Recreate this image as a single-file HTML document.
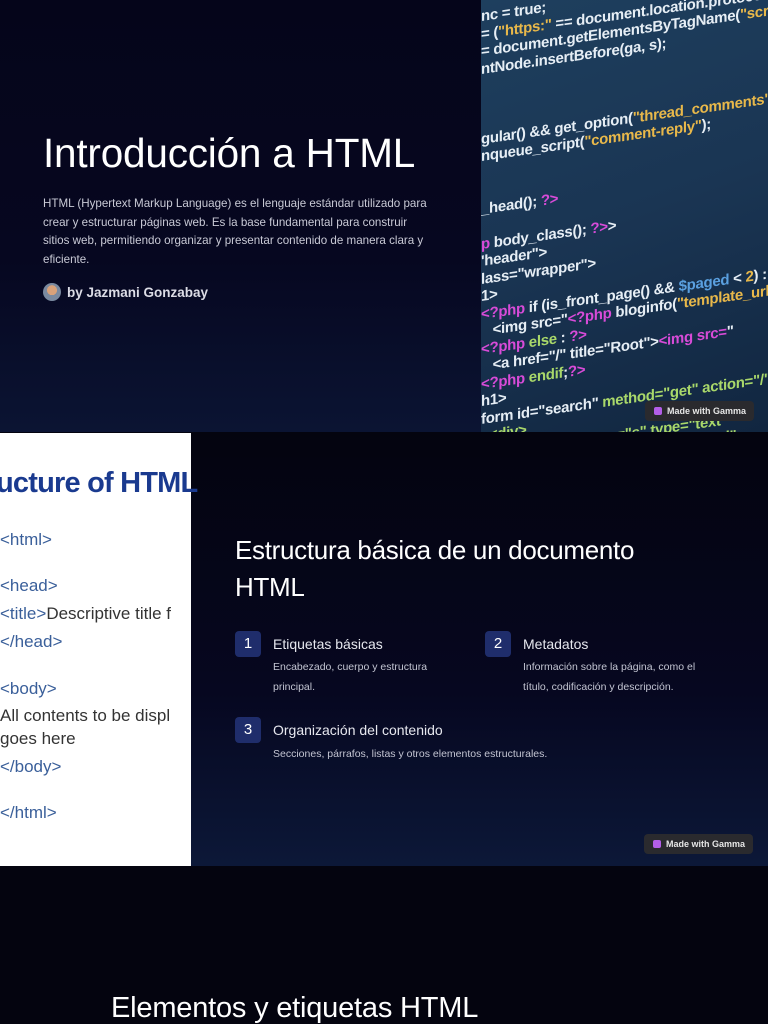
<!DOCTYPE html>
<html><head><meta charset="utf-8"><style>
*{margin:0;padding:0;box-sizing:border-box}
body{width:768px;height:1024px;overflow:hidden;background:#04040f;font-family:"Liberation Sans",sans-serif;color:#fff}
.slide{position:absolute;left:0;width:768px;overflow:hidden}
#s1{top:0;height:432px;background:linear-gradient(180deg,#05051a 0%,#060720 60%,#0b1433 100%)}
#s2{top:433px;height:433px;background:linear-gradient(180deg,#04040f 0%,#060720 60%,#0c1838 100%)}
#s3{top:867px;height:157px;background:#04040f}
h1{position:absolute;left:43px;top:130px;font-size:40.5px;font-weight:400;letter-spacing:-0.2px}
.p1{position:absolute;left:43px;top:195px;width:393px;font-size:11.6px;line-height:18.7px;color:#c9cad6;letter-spacing:0}
.by{position:absolute;left:43px;top:283px;font-size:13.5px;font-weight:bold;color:#dcdde6;display:flex;align-items:center}
.av{width:18px;height:18px;border-radius:50%;background:radial-gradient(circle at 50% 40%,#d9a27a 0 35%,#7a8aa0 36%);margin-right:6px}
.code{position:absolute;left:481px;top:0;width:287px;height:432px;overflow:hidden;background:linear-gradient(160deg,#1e3f5e 0%,#1a3553 50%,#112640 100%)}
.code pre{position:absolute;left:0;top:8px;transform:skewY(-8deg);transform-origin:0 0;font-family:"Liberation Sans",sans-serif;font-size:15px;line-height:17.5px;color:#e6eef5;white-space:pre;letter-spacing:-0.3px;font-weight:bold}
.y{color:#e8b84a}.m{color:#d84bd8}.g{color:#a9d86a}.b{color:#5aa0e0}
.badge{position:absolute;background:#2a2a2e;border-radius:4px;font-size:9px;color:#e6e6e6;padding:5px 8px 5px 22px;font-weight:bold}
.badge:before{content:"";position:absolute;left:9px;top:6px;width:8px;height:8px;border-radius:2px;background:#b35ee8}
.img2{position:absolute;left:0;top:0;width:191px;height:433px;background:#fff;color:#3a5f9a;font-size:17px}
.img2 div{position:absolute;left:0;white-space:nowrap}
.dk{color:#333}
h2{position:absolute;left:235px;top:99px;font-size:26px;font-weight:400;line-height:37px;width:470px;letter-spacing:-0.3px}
.n{position:absolute;width:26px;height:26px;background:#1f2d6b;border-radius:4px;font-size:15px;text-align:center;line-height:26px}
.t{position:absolute;font-size:14px;color:#e6e7ee}
.d{position:absolute;font-size:10.5px;line-height:19.5px;color:#c3c5d2}
h3{position:absolute;left:111px;top:125px;font-size:29px;font-weight:400;letter-spacing:-0.2px}
</style></head><body>
<div class="slide" id="s1">
<h1>Introducción a HTML</h1>
<div class="p1">HTML (Hypertext Markup Language) es el lenguaje estándar utilizado para crear y estructurar páginas web. Es la base fundamental para construir sitios web, permitiendo organizar y presentar contenido de manera clara y eficiente.</div>
<div class="by"><span class="av"></span>by Jazmani Gonzabay</div>
<div class="code"><pre>nc = true;
= (<span class="y">"https:"</span> == document.location.protocol ? <span class="y">"https://ss</span>
= document.getElementsByTagName(<span class="y">"script"</span>)[0];
ntNode.insertBefore(ga, s);



gular() &amp;&amp; get_option(<span class="y">"thread_comments"</span>)) {
nqueue_script(<span class="y">"comment-reply"</span>);


_head(); <span class="m">?&gt;</span>

<span class="m">p</span> body_class(); <span class="m">?&gt;</span>&gt;
'header"&gt;
lass="wrapper"&gt;
1&gt;
<span class="m">&lt;?php</span> if (is_front_page() &amp;&amp; <span class="b">$paged</span> &lt; <span class="y">2</span>) : <span class="m">?&gt;</span>
   &lt;img src="<span class="m">&lt;?php</span> bloginfo(<span class="y">"template_url"</span>);
<span class="m">&lt;?php</span> <span class="g">else</span> : <span class="m">?&gt;</span>
   &lt;a href="/" title="Root"&gt;<span class="m">&lt;img src=</span>"
<span class="m">&lt;?php</span> <span class="g">endif</span>;<span class="m">?&gt;</span>
h1&gt;
form id="search" <span class="g">method="get" action="/"</span>&gt;
  <span class="g">&lt;div&gt;</span>
    <span class="g">&lt;input accesskey="s" type="text"</span>
    <span class="g">&lt;input type="submit" value="Find"</span>
</pre></div>
<div class="badge" style="left:645px;top:401px">Made with Gamma</div>
</div>
<div class="slide" id="s2">
<div class="img2">
<div style="top:34px;font-size:29px;font-weight:bold;color:#1a3a8f;left:-4px;letter-spacing:-0.8px">ucture of HTML</div>
<div style="top:97px">&lt;html&gt;</div>
<div style="top:143px">&lt;head&gt;</div>
<div style="top:171px">&lt;title&gt;<span class="dk">Descriptive title f</span></div>
<div style="top:199px">&lt;/head&gt;</div>
<div style="top:246px">&lt;body&gt;</div>
<div style="top:273px" class="dk">All contents to be displ</div>
<div style="top:296px" class="dk">goes here</div>
<div style="top:324px">&lt;/body&gt;</div>
<div style="top:370px">&lt;/html&gt;</div>
</div>
<h2>Estructura básica de un documento HTML</h2>
<div class="n" style="left:235px;top:198px">1</div>
<div class="t" style="left:273px;top:203px">Etiquetas básicas</div>
<div class="d" style="left:273px;top:225px;width:190px">Encabezado, cuerpo y estructura principal.</div>
<div class="n" style="left:485px;top:198px">2</div>
<div class="t" style="left:523px;top:203px">Metadatos</div>
<div class="d" style="left:523px;top:225px;width:200px">Información sobre la página, como el título, codificación y descripción.</div>
<div class="n" style="left:235px;top:284px">3</div>
<div class="t" style="left:273px;top:289px">Organización del contenido</div>
<div class="d" style="left:273px;top:312px">Secciones, párrafos, listas y otros elementos estructurales.</div>
<div class="badge" style="left:644px;top:401px">Made with Gamma</div>
</div>
<div class="slide" id="s3"><h3>Elementos y etiquetas HTML</h3></div>
</body></html>
